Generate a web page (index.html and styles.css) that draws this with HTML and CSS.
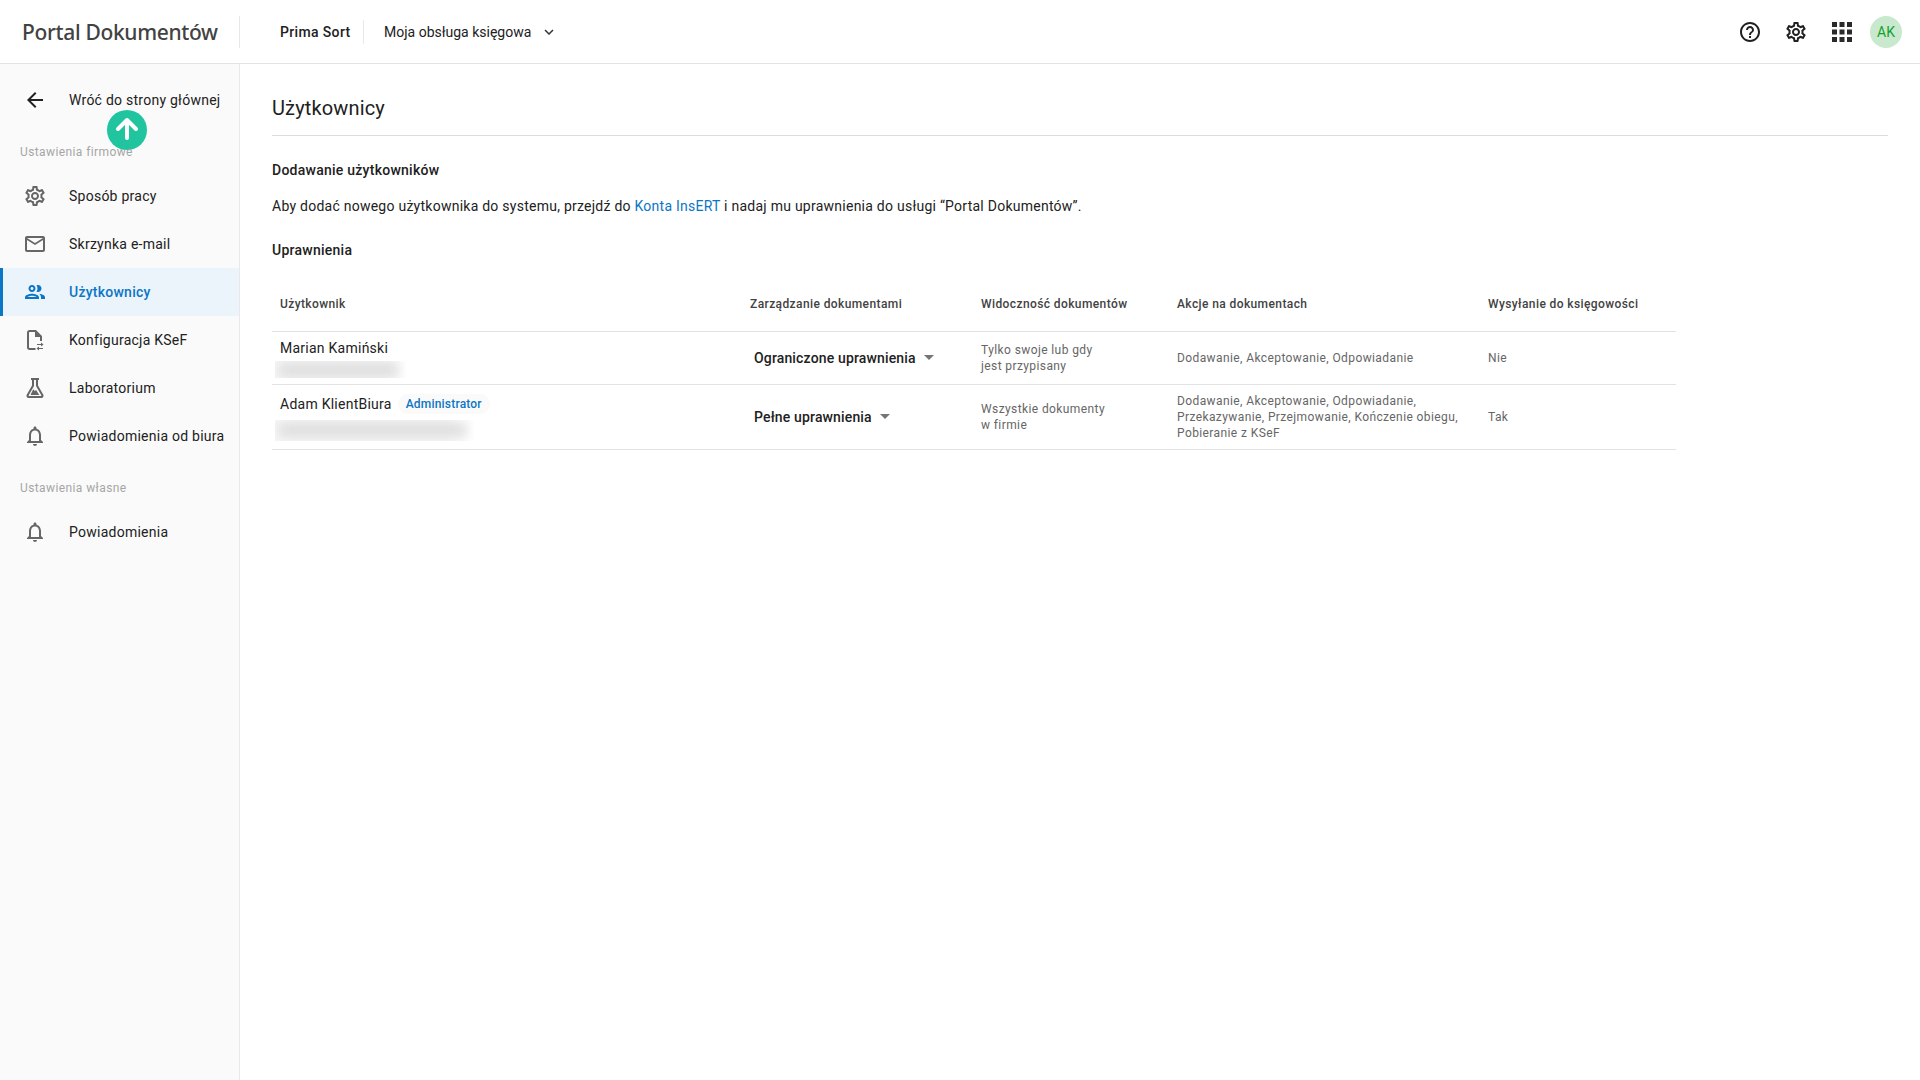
FILE: index.html
```html
<!DOCTYPE html>
<html lang="pl">
<head>
<meta charset="utf-8">
<title>Portal Dokumentów</title>
<link rel="stylesheet" href="styles.css">
</head>
<body>
<header class="topbar">
  <div class="brand"><span class="brand-name">Portal Dokumentów</span></div>
  <div class="company">Prima Sort</div>
  <div class="mode">
    <span>Moja obsługa księgowa</span>
    <svg class="chev" viewBox="0 0 24 24"><path d="M7.41 8.59 12 13.17l4.59-4.58L18 10l-6 6-6-6z"/></svg>
  </div>
  <div class="top-actions">
    <svg class="top-icon" viewBox="0 0 24 24"><path d="M11 18h2v-2h-2v2zm1-16C6.48 2 2 6.48 2 12s4.48 10 10 10 10-4.48 10-10S17.52 2 12 2zm0 18c-4.41 0-8-3.59-8-8s3.59-8 8-8 8 3.59 8 8-3.59 8-8 8zm0-14c-2.21 0-4 1.79-4 4h2c0-1.1.9-2 2-2s2 .9 2 2c0 2-3 1.75-3 5h2c0-2.25 3-2.5 3-5 0-2.21-1.79-4-4-4z"/></svg>
    <svg class="top-icon" viewBox="0 0 24 24"><use href="#gear"/></svg>
    <svg class="top-icon apps" viewBox="0 0 24 24"><path d="M4 8h4V4H4v4zm6 12h4v-4h-4v4zm-6 0h4v-4H4v4zm0-6h4v-4H4v4zm6 0h4v-4h-4v4zm6-10v4h4V4h-4zm-6 4h4V4h-4v4zm6 6h4v-4h-4v4zm0 6h4v-4h-4v4z"/></svg>
    <div class="avatar">AK</div>
  </div>
</header>
<svg class="defs" width="0" height="0">
  <defs>
    <path id="gear" d="M19.43 12.98c.04-.32.07-.64.07-.98 0-.34-.03-.66-.07-.98l2.11-1.65c.19-.15.24-.42.12-.64l-2-3.46c-.09-.16-.26-.25-.44-.25-.06 0-.12.01-.17.03l-2.49 1c-.52-.4-1.08-.73-1.69-.98l-.38-2.65C14.46 2.18 14.25 2 14 2h-4c-.25 0-.46.18-.49.42l-.38 2.65c-.61.25-1.17.59-1.69.98l-2.49-1c-.06-.02-.12-.03-.18-.03-.17 0-.34.09-.43.25l-2 3.46c-.13.22-.07.49.12.64l2.11 1.65c-.04.32-.07.65-.07.98 0 .33.03.66.07.98l-2.11 1.65c-.19.15-.24.42-.12.64l2 3.46c.09.16.26.25.44.25.06 0 .12-.01.17-.03l2.49-1c.52.4 1.08.73 1.69.98l.38 2.65c.03.24.24.42.49.42h4c.25 0 .46-.18.49-.42l.38-2.65c.61-.25 1.17-.59 1.69-.98l2.49 1c.06.02.12.03.18.03.17 0 .34-.09.43-.25l2-3.46c.12-.22.07-.49-.12-.64l-2.11-1.65zm-1.98-1.71c.04.31.05.52.05.73 0 .21-.02.43-.05.73l-.14 1.13.89.7 1.08.84-.7 1.21-1.27-.51-1.04-.42-.9.68c-.43.32-.84.56-1.25.73l-1.06.43-.16 1.13-.2 1.35h-1.4l-.19-1.35-.16-1.13-1.06-.43c-.43-.18-.83-.41-1.23-.71l-.91-.7-1.06.43-1.27.51-.7-1.21 1.08-.84.89-.7-.14-1.13c-.03-.31-.05-.54-.05-.74s.02-.43.05-.73l.14-1.13-.89-.7-1.08-.84.7-1.21 1.27.51 1.04.42.9-.68c.43-.32.84-.56 1.25-.73l1.06-.43.16-1.13.2-1.35h1.39l.19 1.35.16 1.13 1.06.43c.43.18.83.41 1.23.71l.91.7 1.06-.43 1.27-.51.7 1.21-1.07.85-.89.7.14 1.13zM12 8c-2.21 0-4 1.79-4 4s1.79 4 4 4 4-1.79 4-4-1.79-4-4-4zm0 6c-1.1 0-2-.9-2-2s.9-2 2-2 2 .9 2 2-.9 2-2 2z"/>
    <path id="bell" d="M12 22c1.1 0 2-.9 2-2h-4c0 1.1.9 2 2 2zm6-6v-5c0-3.07-1.63-5.64-4.5-6.32V4c0-.83-.67-1.5-1.5-1.5s-1.5.67-1.5 1.5v.68C7.64 5.36 6 7.92 6 11v5l-2 2v1h16v-1l-2-2zm-2 1H8v-6c0-2.48 1.51-4.5 4-4.5s4 2.02 4 4.5v6z"/>
  </defs>
</svg>
<div class="shell">
  <nav class="sidebar">
    <a class="nav-item back">
      <svg class="nav-icon dark" viewBox="0 0 24 24"><path d="M20 11H7.83l5.59-5.59L12 4l-8 8 8 8 1.41-1.41L7.83 13H20v-2z"/></svg>
      <span>Wróć do strony głównej</span>
    </a>
    <div class="nav-label">Ustawienia firmowe</div>
    <a class="nav-item">
      <svg class="nav-icon" viewBox="0 0 24 24"><use href="#gear"/></svg>
      <span>Sposób pracy</span>
    </a>
    <a class="nav-item">
      <svg class="nav-icon" viewBox="0 0 24 24"><path d="M20 4H4c-1.1 0-1.99.9-1.99 2L2 18c0 1.1.9 2 2 2h16c1.1 0 2-.9 2-2V6c0-1.1-.9-2-2-2zm0 14H4V8l8 5 8-5v10zm-8-7L4 6h16l-8 5z"/></svg>
      <span>Skrzynka e-mail</span>
    </a>
    <a class="nav-item active">
      <svg class="nav-icon" viewBox="0 0 24 24"><path d="M9 13.75c-2.34 0-7 1.17-7 3.5V19h14v-1.75c0-2.33-4.66-3.5-7-3.5zM4.34 17c.84-.58 2.87-1.25 4.66-1.25s3.82.67 4.66 1.25H4.34zM9 12c1.93 0 3.5-1.57 3.5-3.5S10.93 5 9 5 5.5 6.57 5.5 8.5 7.07 12 9 12zm0-5c.83 0 1.5.67 1.5 1.5S9.83 10 9 10s-1.5-.67-1.5-1.5S8.17 7 9 7zm7.04 6.81c1.16.84 1.96 1.96 1.96 3.44V19h4v-1.75c0-2.02-3.5-3.17-5.96-3.44zM15 12c1.93 0 3.5-1.57 3.5-3.5S16.93 5 15 5c-.54 0-1.04.13-1.5.35.63.89 1 1.98 1 3.15s-.37 2.26-1 3.15c.46.22.96.35 1.5.35z"/></svg>
      <span>Użytkownicy</span>
    </a>
    <a class="nav-item">
      <svg class="nav-icon" viewBox="0 0 24 24"><path d="M13 2H6.500C5.100 2 4 3.100 4 4.500v15C4 20.900 5.100 22 6.500 22H12.500v-2H6.500c-.3 0-.5-.2-.5-.5v-15c0-.3.2-.5.5-.5H12v5h5v4h2V8z"/><path d="M14 16h4v-1.500l2.500 2-2.500 2V17h-4zM20 20h-4v-1.500l-2.500 2 2.500 2V21h4z"/></svg>
      <span>Konfiguracja KSeF</span>
    </a>
    <a class="nav-item">
      <svg class="nav-icon" viewBox="0 0 24 24"><path d="M8 2h8v2h-1v5.600l5.300 9.100c.7 1.300-.2 3.300-1.800 3.300h-13c-1.600 0-2.500-2-1.800-3.300L9 9.600V4H8V2zm3 2v6.100L5.700 19.300c-.2.4 0 .7.4.7h11.800c.4 0 .6-.3.4-.7L13 10.100V4h-2z"/><path d="M10.200 13.200l1.600 1.800 1.300-1 3.200 5H7.500z"/></svg>
      <span>Laboratorium</span>
    </a>
    <a class="nav-item">
      <svg class="nav-icon" viewBox="0 0 24 24"><use href="#bell"/></svg>
      <span>Powiadomienia od biura</span>
    </a>
    <div class="nav-label">Ustawienia własne</div>
    <a class="nav-item">
      <svg class="nav-icon" viewBox="0 0 24 24"><use href="#bell"/></svg>
      <span>Powiadomienia</span>
    </a>
    <div class="scroll-top">
      <svg viewBox="0 0 40 40"><path d="M20 28V10M11 19l9-9 9 9"/></svg>
    </div>
  </nav>
  <main class="content">
    <h1 class="page-title">Użytkownicy</h1>
    <h2 class="section-title add">Dodawanie użytkowników</h2>
    <p class="intro">Aby dodać nowego użytkownika do systemu, przejdź do <a class="link">Konta InsERT</a> i nadaj mu uprawnienia do usługi “Portal Dokumentów”.</p>
    <h2 class="section-title perms">Uprawnienia</h2>
    <table class="perm-table">
      <colgroup>
        <col class="c-user"><col class="c-mgmt"><col class="c-vis"><col class="c-act"><col class="c-send">
      </colgroup>
      <thead>
        <tr>
          <th>Użytkownik</th>
          <th>Zarządzanie dokumentami</th>
          <th>Widoczność dokumentów</th>
          <th>Akcje na dokumentach</th>
          <th>Wysyłanie do księgowości</th>
        </tr>
      </thead>
      <tbody>
        <tr class="row-one">
          <td>
            <div class="name-line"><span class="name">Marian Kamiński</span></div>
            <div class="blur-mail short"></div>
          </td>
          <td><div class="select"><span>Ograniczone uprawnienia</span><i class="caret"></i></div></td>
          <td>Tylko swoje lub gdy<br>jest przypisany</td>
          <td>Dodawanie, Akceptowanie, Odpowiadanie</td>
          <td>Nie</td>
        </tr>
        <tr class="row-two">
          <td>
            <div class="name-line"><span class="name">Adam KlientBiura</span><span class="badge">Administrator</span></div>
            <div class="blur-mail long"></div>
          </td>
          <td><div class="select"><span>Pełne uprawnienia</span><i class="caret"></i></div></td>
          <td>Wszystkie dokumenty<br>w firmie</td>
          <td>Dodawanie, Akceptowanie, Odpowiadanie,<br>Przekazywanie, Przejmowanie, Kończenie obiegu,<br>Pobieranie z KSeF</td>
          <td>Tak</td>
        </tr>
      </tbody>
    </table>
  </main>
</div>
</body>
</html>
```
FILE: styles.css
```css
* { box-sizing: border-box; }
html, body { margin: 0; height: 100%; }
body {
  font-family: Roboto, "Liberation Sans", sans-serif;
  font-size: 14px;
  letter-spacing: 0.25px;
  color: #212121;
  background: #fff;
  overflow: hidden;
}
.defs { position: absolute; }

.topbar {
  display: flex;
  align-items: center;
  height: 64px;
  border-bottom: 1px solid #e2e2e2;
  background: #fff;
}
.brand {
  width: 240px;
  height: 32px;
  padding: 1px 0 0 22px;
  border-right: 1px solid #e8e8e8;
  display: flex;
  align-items: center;
  flex: none;
}
.brand-name {
  font-family: "Noto Sans", "Open Sans", sans-serif;
  font-size: 21px;
  font-weight: 500;
  color: #424242;
  white-space: nowrap;
  letter-spacing: -0.33px;
}
.company {
  margin-left: 40px;
  width: 84px;
  height: 24px;
  line-height: 24px;
  font-weight: 500;
  letter-spacing: 0.35px;
  border-right: 1px solid #e8e8e8;
  white-space: nowrap;
}
.mode {
  margin-left: 20px;
  display: flex;
  align-items: center;
  gap: 9px;
  letter-spacing: 0;
}
.chev { width: 18px; height: 18px; fill: #333; }
.top-actions {
  margin-left: auto;
  margin-right: 18px;
  display: flex;
  align-items: center;
  gap: 22px;
}
.top-icon { width: 24px; height: 24px; fill: #212121; display: block; }
.top-icon.apps { width: 30px; height: 30px; margin: 0 -3px; fill: #2a2a2a; }
.avatar {
  width: 32px;
  height: 32px;
  margin-left: -6px;
  border-radius: 50%;
  background: #c8e9cd;
  color: #16a02f;
  font-size: 14px;
  letter-spacing: 0;
  display: flex;
  align-items: center;
  justify-content: center;
}

.shell { display: flex; height: calc(100vh - 64px); }
.sidebar {
  position: relative;
  width: 240px;
  flex: none;
  background: #fafafa;
  border-right: 1px solid #e8e8e8;
  padding-top: 12px;
}
.nav-item {
  display: flex;
  align-items: center;
  height: 48px;
  padding-left: 23px;
  gap: 22px;
  color: #212121;
  white-space: nowrap;
}
.nav-icon { width: 24px; height: 24px; fill: #666; flex: none; }
.nav-icon.dark { fill: #212121; }
.nav-item.active {
  background: #ebf3fb;
  color: #0b76c5;
  font-weight: 500;
  box-shadow: inset 3px 0 0 #0b76c5;
}
.nav-item.active .nav-icon { fill: #0b76c5; }
.nav-label {
  position: relative;
  z-index: 1;
  height: 44px;
  margin-top: 4px;
  padding: 14px 0 0 20px;
  font-size: 12px;
  line-height: 20px;
  letter-spacing: 0.4px;
  color: #a6a6a6;
}
.scroll-top {
  position: absolute;
  left: 107px;
  top: 46px;
  width: 40px;
  height: 40px;
  border-radius: 50%;
  background: #20c5a0;
}
.scroll-top svg {
  display: block;
  width: 40px;
  height: 40px;
  fill: none;
  stroke: #fff;
  stroke-width: 4;
  stroke-linecap: round;
  stroke-linejoin: round;
}

.content { flex: 1; padding: 0 32px; min-width: 0; }
.page-title {
  margin: 0;
  height: 72px;
  padding-top: 30px;
  font-size: 20px;
  line-height: 28px;
  font-weight: 400;
  letter-spacing: 0.15px;
  color: #212121;
  border-bottom: 1px solid #dcdcdc;
}
.section-title {
  margin: 0;
  font-size: 14px;
  line-height: 20px;
  font-weight: 500;
}
.section-title.add { margin-top: 24px; }
.intro { margin: 16px 0 0; line-height: 20px; }
.link { color: #0b76c5; }
.section-title.perms { margin-top: 24px; }

.perm-table {
  margin-top: 15px;
  width: 1404px;
  border-collapse: collapse;
  table-layout: fixed;
  font-size: 12px;
  letter-spacing: 0.4px;
  color: #666;
  line-height: 16px;
}
.c-user { width: 470px; }
.c-mgmt { width: 231px; }
.c-vis { width: 196px; }
.c-act { width: 311px; }
.c-send { width: 196px; }
.perm-table th {
  height: 56px;
  padding: 2px 8px 0;
  text-align: left;
  font-weight: 500;
  color: #424242;
  white-space: nowrap;
  border-bottom: 1px solid #e2e2e2;
}
.perm-table td {
  padding: 0 8px;
  vertical-align: middle;
  border-bottom: 1px solid #e2e2e2;
  white-space: nowrap;
}
.row-one { height: 53px; }
.row-two { height: 65px; }
.name-line { display: flex; align-items: center; height: 20px; margin-top: 1px; }
.name { font-size: 14px; letter-spacing: 0.25px; color: #212121; }
.badge {
  margin-left: 6px;
  height: 20px;
  line-height: 20px;
  padding: 0 8px;
  border-radius: 10px;
  background: #fafafa;
  color: #0b76c5;
  font-size: 12px;
  letter-spacing: 0.2px;
  font-weight: 500;
}
.blur-mail {
  margin-left: -5px;
  background: linear-gradient(to right, #f6f6f6 85%, #fff);
  position: relative;
  overflow: hidden;
}
.blur-mail::after {
  content: "";
  position: absolute;
  left: 4px;
  top: 50%;
  height: 12px;
  margin-top: -6px;
  background: #dadada;
  filter: blur(6px);
  width: calc(100% - 12px);
}
.blur-mail.short { width: 131px; height: 17px; margin-top: 3px; }
.blur-mail.long { width: 199px; height: 21px; margin-top: 6px; }
.select {
  display: flex;
  align-items: center;
  padding-left: 4px;
  font-size: 14px;
  letter-spacing: 0.15px;
  font-weight: 500;
  color: #212121;
}
.caret {
  margin-left: 8px;
  width: 0;
  height: 0;
  border-left: 5px solid transparent;
  border-right: 5px solid transparent;
  border-top: 5px solid #757575;
}
```
